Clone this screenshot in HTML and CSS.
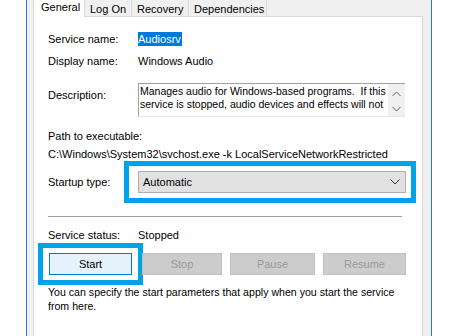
FILE: index.html
```html
<!DOCTYPE html>
<html lang="en">
<head>
    <meta charset="UTF-8">
    <title>Windows Audio Properties</title>
    <link rel="stylesheet" href="styles.css">
</head>
<body>
    <div class="window">
        <div class="tabs">
            <div class="tab active">General</div>
            <div class="tab">Log On</div>
            <div class="tab">Recovery</div>
            <div class="tab">Dependencies</div>
            <div class="tab-fill"></div>
        </div>

        <div class="panel">
            <div class="row first">
                <div class="label">Service name:</div>
                <div class="value"><span class="selected">Audiosrv</span></div>
            </div>

            <div class="row display">
                <div class="label">Display name:</div>
                <div class="value">Windows Audio</div>
            </div>

            <div class="row desc">
                <div class="label">Description:</div>
                <div class="textbox">
                    <div class="textbox-text">
                        <div>Manages audio for Windows-based programs.&nbsp; If this</div>
                        <div>service is stopped, audio devices and effects will not</div>
                    </div>
                    <div class="scrollbar">
                        <svg width="9" height="6" viewBox="0 0 9 6"><path d="M0.5 5 L4.5 1 L8.5 5" fill="none" stroke="#606060" stroke-width="1"/></svg>
                        <svg width="9" height="6" viewBox="0 0 9 6"><path d="M0.5 1 L4.5 5 L8.5 1" fill="none" stroke="#606060" stroke-width="1"/></svg>
                    </div>
                </div>
            </div>

            <div class="path-label">Path to executable:</div>
            <div class="path-value">C:\Windows\System32\svchost.exe -k LocalServiceNetworkRestricted</div>

            <div class="row startup">
                <div class="label">Startup type:</div>
                <div class="select">
                    <span>Automatic</span>
                    <svg width="10" height="6" viewBox="0 0 10 6"><path d="M0.5 0.5 L5 5 L9.5 0.5" fill="none" stroke="#333" stroke-width="1"/></svg>
                    <div class="highlight select-mark"></div>
                </div>
            </div>

            <div class="separator"></div>

            <div class="row status">
                <div class="label">Service status:</div>
                <div class="value">Stopped</div>
            </div>

            <div class="buttons">
                <button class="btn primary">Start<span class="highlight start-mark"></span></button>
                <button class="btn stop" disabled>Stop</button>
                <button class="btn pause" disabled>Pause</button>
                <button class="btn resume" disabled>Resume</button>
            </div>

            <p class="hint">You can specify the start parameters that apply when you start the service<br>from here.</p>
        </div>
    </div>
</body>
</html>
```

FILE: styles.css
```css
* {
    margin: 0;
    padding: 0;
    box-sizing: border-box;
}

body {
    font-family: "Liberation Sans", Arial, sans-serif;
    font-size: 11px;
    color: #000;
    background: #fff;
    height: 336px;
    overflow: hidden;
}

.window {
    margin-left: 26px;
    width: 406px;
    height: 336px;
    background: #f0f0f0;
    border-left: 1px solid #2478cc;
    border-right: 1px solid #2478cc;
    padding: 0 8px 0 6px;
}

/* tab strip */
.tabs {
    display: flex;
    height: 17px;
}

.tab {
    height: 17px;
    line-height: 17px;
    padding-top: 1px;
    border-right: 1px solid #d9d9d9;
    border-bottom: 1px solid #d9d9d9;
    background: #f0f0f0;
    white-space: nowrap;
}

.tab.active {
    width: 52px;
    padding-left: 7px;
    padding-top: 0;
    line-height: 15px;
    background: #fff;
    border-left: 1px solid #d9d9d9;
    border-bottom: none;
}

.tab:nth-child(2) { width: 47px; padding-left: 5px; }
.tab:nth-child(3) { width: 57px; padding-left: 5px; }
.tab:nth-child(4) { width: 78px; padding-left: 5px; }

.tab-fill {
    flex: 1;
    border-bottom: 1px solid #d9d9d9;
}

/* page */
.panel {
    height: 319px;
    background: #fff;
    border-left: 1px solid #d9d9d9;
    border-right: 1px solid #d9d9d9;
    padding: 15px 0 0 14px;
    line-height: 14px;
}

.row {
    display: flex;
}

.label {
    width: 90px;
    flex-shrink: 0;
}

.selected {
    background: #0078d7;
    color: #fff;
    padding: 0 1px 0 0;
    display: inline-block;
}

.display { margin-top: 8px; }

.desc { margin-top: 15px; }

.desc .label { padding-top: 5px; }

.textbox {
    display: flex;
    width: 267px;
    height: 34px;
    border: 1px solid #a0a0a0;
    border-right: none;
    border-bottom-color: #e6e6e6;
}

.textbox-text {
    flex: 1;
    padding: 1px 0 0 1px;
    font-size: 10.5px;
    line-height: 13px;
    white-space: nowrap;
    overflow: hidden;
}

.scrollbar {
    width: 17px;
    background: #f0f0f0;
    display: flex;
    flex-direction: column;
    align-items: center;
    justify-content: space-between;
    padding: 7px 0 4px;
}

.path-label { margin-top: 12px; }

.path-value { margin-top: 4px; white-space: nowrap; }

.startup {
    margin-top: 10px;
    align-items: center;
}

.select {
    position: relative;
    display: flex;
    align-items: center;
    justify-content: space-between;
    width: 268px;
    height: 22px;
    background: #e1e1e1;
    border: 1px solid #adadad;
    padding: 0 5px 0 4px;
}

.highlight {
    position: absolute;
    border: 5px solid #00a2e8;
    pointer-events: none;
}

.select-mark {
    left: -15px;
    right: -11px;
    top: -11px;
    bottom: -11px;
}

.separator {
    margin-top: 23px;
    width: 354px;
    height: 1px;
    background: #a0a0a0;
}

.status { margin-top: 11px; }

.buttons {
    display: flex;
    margin-top: 11px;
    padding-left: 1px;
}

.btn {
    position: relative;
    height: 22px;
    font: inherit;
    color: #000;
    background: #e5f1fb;
    border: 1px solid #0078d7;
}

.btn:disabled {
    background: #cccccc;
    border-color: #bfbfbf;
    color: #9a9a9a;
}

.primary { width: 83px; }
.stop { width: 80px; margin-left: 10px; }
.pause { width: 85px; margin-left: 8px; }
.resume { width: 83px; margin-left: 8px; }

.start-mark {
    left: -12px;
    right: -12px;
    top: -11px;
    bottom: -11px;
}

.hint {
    margin-top: 10px;
    font-size: 10.6px;
    line-height: 14px;
}
```
